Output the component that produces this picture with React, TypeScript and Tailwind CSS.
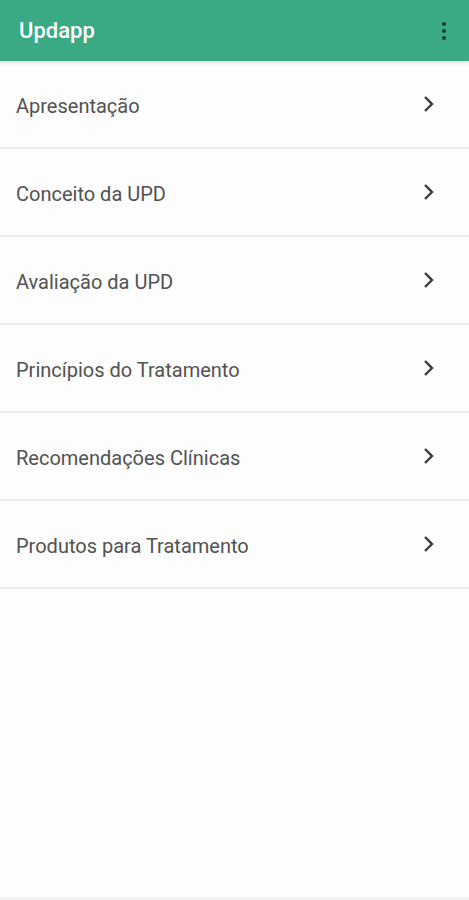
import React from "react";

const items = [
  "Apresentação",
  "Conceito da UPD",
  "Avaliação da UPD",
  "Princípios do Tratamento",
  "Recomendações Clínicas",
  "Produtos para Tratamento",
];

export default function App() {
  return (
    <div className="w-[469px] h-[900px] bg-[#fdfdfd] flex flex-col" style={{ fontFamily: "Roboto, 'Noto Sans', sans-serif" }}>
      <div className="h-[61px] bg-[#3aaa85] flex items-center justify-between pl-[19px] pr-[18px] shadow-[0_2px_3px_rgba(0,0,0,0.12)] relative z-10">
        <span className="text-white text-[22px] font-medium">Updapp</span>
        <svg width="14" height="24" viewBox="0 0 14 24" className="mt-[1px]">
          <circle cx="7" cy="5" r="2" fill="#1d3b30" />
          <circle cx="7" cy="12" r="2" fill="#1d3b30" />
          <circle cx="7" cy="19" r="2" fill="#1d3b30" />
        </svg>
      </div>
      <div className="flex flex-col">
        {items.map((t) => (
          <div key={t} className="h-[88px] flex items-center justify-between pl-[16px] pr-[34px] border-b-2 border-[#ececec]">
            <span className="text-[20px] text-[#525252] pt-[3px]">{t}</span>
            <svg width="12" height="18" viewBox="0 0 12 18">
              <path d="M2 2 L9 9 L2 16" fill="none" stroke="#3a3a3a" strokeWidth="2.4" />
            </svg>
          </div>
        ))}
      </div>
      <div className="flex-1" />
      <div className="h-[3px] bg-[#f1f1f1]" />
    </div>
  );
}
